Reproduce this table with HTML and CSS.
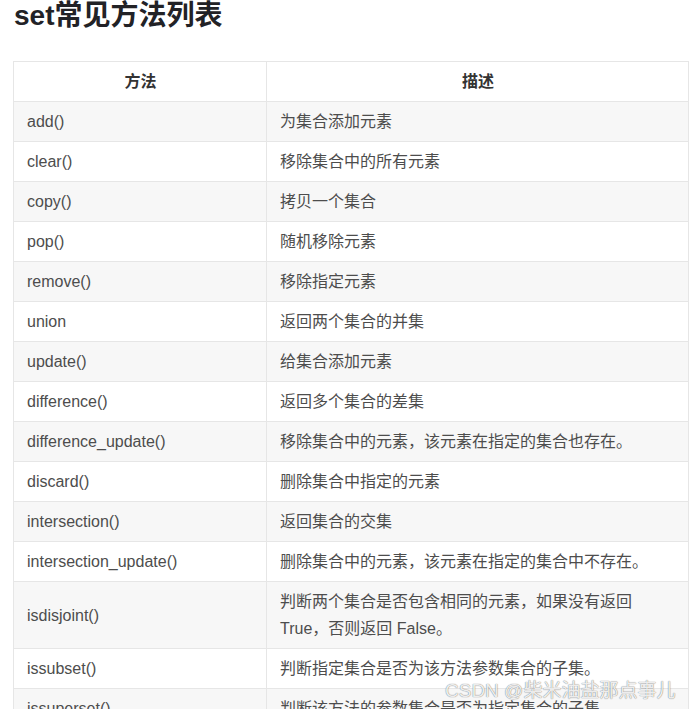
FILE: index.html
```html
<!DOCTYPE html>
<html lang="zh">
<head>
<meta charset="utf-8">
<link rel="stylesheet" href="styles.css">
</head>
<body>
<div class="page">
  <h2 class="title">set常见方法列表</h2>
  <table class="methods">
    <thead>
      <tr><th class="col-name">方法</th><th class="col-desc">描述</th></tr>
    </thead>
    <tbody>
      <tr><td>add()</td><td>为集合添加元素</td></tr>
      <tr><td>clear()</td><td>移除集合中的所有元素</td></tr>
      <tr><td>copy()</td><td>拷贝一个集合</td></tr>
      <tr><td>pop()</td><td>随机移除元素</td></tr>
      <tr><td>remove()</td><td>移除指定元素</td></tr>
      <tr><td>union</td><td>返回两个集合的并集</td></tr>
      <tr><td>update()</td><td>给集合添加元素</td></tr>
      <tr><td>difference()</td><td>返回多个集合的差集</td></tr>
      <tr><td>difference_update()</td><td>移除集合中的元素，该元素在指定的集合也存在。</td></tr>
      <tr><td>discard()</td><td>删除集合中指定的元素</td></tr>
      <tr><td>intersection()</td><td>返回集合的交集</td></tr>
      <tr><td>intersection_update()</td><td>删除集合中的元素，该元素在指定的集合中不存在。</td></tr>
      <tr><td>isdisjoint()</td><td>判断两个集合是否包含相同的元素，如果没有返回<br>True，否则返回 False。</td></tr>
      <tr><td>issubset()</td><td>判断指定集合是否为该方法参数集合的子集。</td></tr>
      <tr><td>issuperset()</td><td>判断该方法的参数集合是否为指定集合的子集</td></tr>
    </tbody>
  </table>
  <div class="watermark">CSDN @柴米油盐那点事儿</div>
</div>
</body>
</html>
```

FILE: styles.css
```css
html, body {
  margin: 0;
  padding: 0;
  background: #ffffff;
}

.page {
  position: relative;
  height: 709px;
  overflow: hidden;
  padding-left: 13px;
  font-family: "Liberation Sans", Arial, "Noto Sans CJK SC", sans-serif;
}

.title {
  margin: 0;
  height: 61px;
  padding-top: 1px;
  padding-left: 1px;
  box-sizing: border-box;
  font-size: 28px;
  line-height: 30px;
  font-weight: 700;
  color: #222226;
}

.methods {
  border-collapse: collapse;
  width: 676px;
  font-size: 16px;
  color: #4d4d4d;
  margin-top: 0;
}

.methods th,
.methods td {
  border: 1px solid #e6e6e6;
  padding: 6px 12px 6px 13px;
  line-height: 27px;
  text-align: left;
  vertical-align: middle;
}

.methods th {
  text-align: center;
  font-weight: 700;
  color: #333333;
  background: #ffffff;
}

.col-name {
  width: 227px;
}

.methods tbody tr:nth-child(odd) {
  background: #f7f7f7;
}

.methods tbody tr:nth-child(even) {
  background: #ffffff;
}

.watermark {
  position: absolute;
  left: 445px;
  top: 679px;
  font-size: 19px;
  line-height: 24px;
  color: rgba(255, 255, 255, 0.9);
  text-shadow: 0 0 1px rgba(0, 0, 0, 0.45), 0 0 1px rgba(0, 0, 0, 0.3);
  white-space: nowrap;
}
```
